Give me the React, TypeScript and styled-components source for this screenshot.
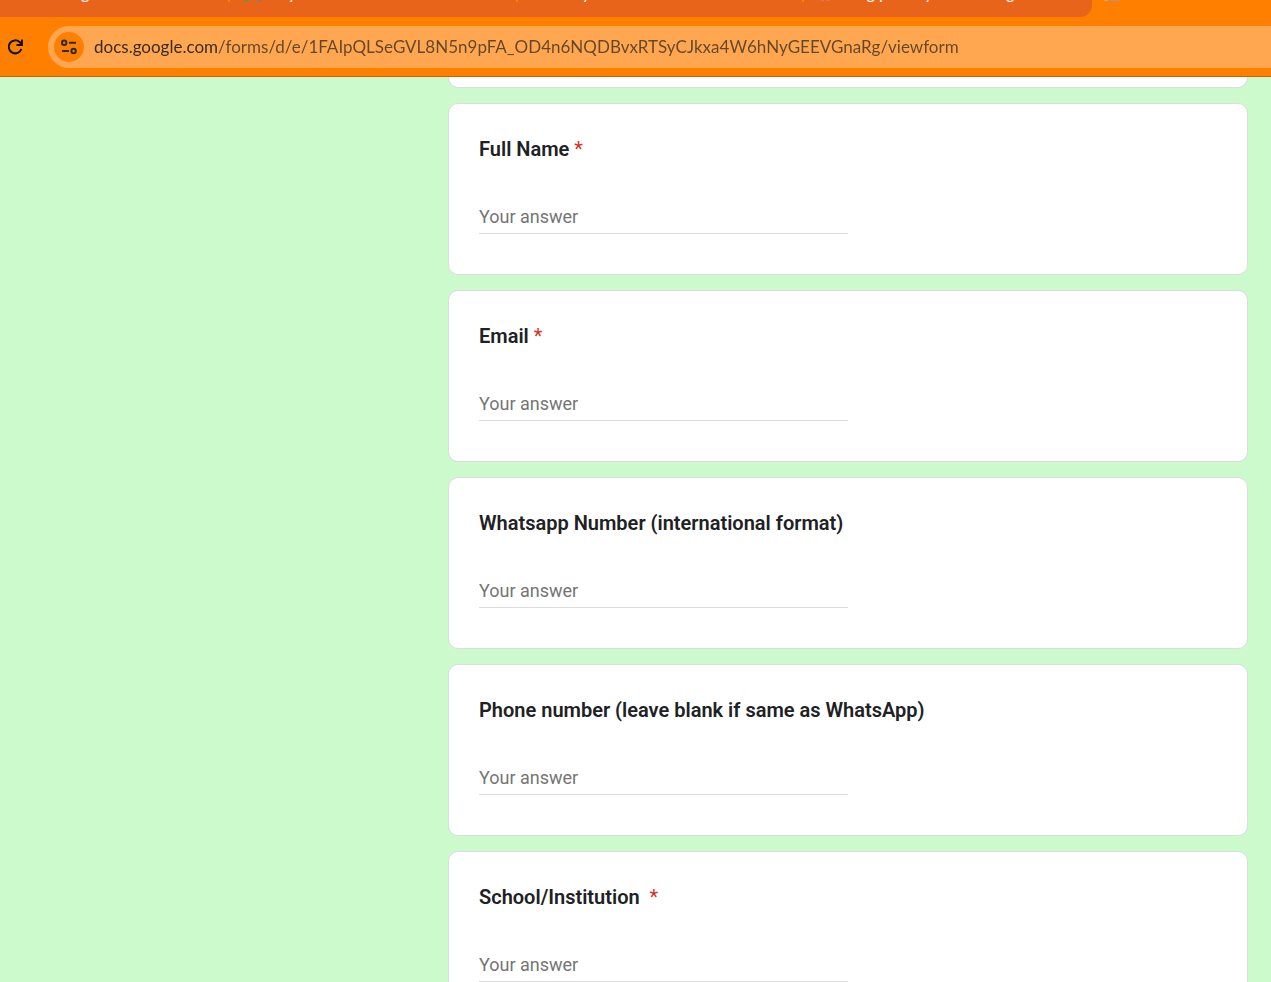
import React, { useId } from "react";
import styled, { createGlobalStyle } from "styled-components";

const GlobalStyle = createGlobalStyle`
  *, *::before, *::after { box-sizing: border-box; }
  body {
    margin: 0;
    font-family: Roboto, "Liberation Sans", sans-serif;
    color: #202124;
    background: #ccfacc;
  }
`;

const Window = styled.div`
  display: flex;
  flex-direction: column;
  height: 100vh;
  overflow: hidden;
`;

const TabStrip = styled.div`
  display: flex;
  flex: none;
  height: 17px;
  overflow: hidden;
  background: #ff8000;
`;

const TabGroup = styled.div`
  display: flex;
  flex: 0 1 1092px;
  height: 17px;
  overflow: hidden;
  background: #e8641b;
  border-bottom-right-radius: 12px;
`;

const Tab = styled.div<{ $basis: number; $inset: number; $divided?: boolean }>`
  display: flex;
  flex: 0 1 ${(p) => p.$basis}px;
  height: 2px;
  gap: 8px;
  padding-left: ${(p) => p.$inset}px;
  overflow: hidden;
  border-right: 2px solid ${(p) => (p.$divided ? "#ff8000" : "transparent")};
`;

const TabTitle = styled.span`
  margin-top: -17px;
  font: 16px/20px Lato, "Noto Sans", sans-serif;
  white-space: pre;
  color: #fff;
`;

const Favicon = styled.svg`
  display: block;
  flex: none;
`;

const NextFavicon = styled(Favicon)`
  margin-left: 12px;
`;

const Toolbar = styled.div`
  display: flex;
  flex: none;
  align-items: center;
  gap: 18px;
  height: 60px;
  background: #ff8000;
  border-bottom: 1px solid #c26608;
`;

const ReloadButton = styled.button`
  display: grid;
  place-items: center;
  width: 30px;
  height: 30px;
  padding: 0;
  border: 0;
  background: none;
`;

const AddressBar = styled.div`
  display: flex;
  flex: 1;
  align-items: center;
  gap: 10px;
  height: 42px;
  padding-left: 6px;
  background: #ffa750;
  border-radius: 21px 0 0 21px;
`;

const SiteButton = styled.button`
  display: grid;
  place-items: center;
  width: 30px;
  height: 30px;
  padding: 0;
  border: 0;
  border-radius: 50%;
  background: #ff8000;
`;

const UrlInput = styled.input`
  flex: 1;
  min-width: 0;
  height: 30px;
  padding: 0;
  border: 0;
  outline: 0;
  font: 17px/30px Lato, "Noto Sans", sans-serif;
  color: transparent;
  caret-color: #2b2b2b;
  background: linear-gradient(to right, #33291f 125px, #644628 125px);
  background-clip: text;
`;

const Page = styled.main`
  flex: 1;
  min-height: 0;
  overflow: hidden;
  padding-right: 23px;
  background: #ccfacc;
`;

const Form = styled.form`
  display: flex;
  flex-direction: column;
  gap: 15px;
  max-width: 800px;
  margin-left: auto;
`;

const Card = styled.div`
  padding: 30px;
  background: #fff;
  border: 1px solid #dadce0;
  border-radius: 10px;
`;

const CardEnd = styled.div`
  height: 11px;
  background: #fff;
  border: 1px solid #dadce0;
  border-top: 0;
  border-radius: 0 0 10px 10px;
`;

const Question = styled.label`
  display: block;
  margin-bottom: 38px;
  font-size: 20px;
  font-weight: 600;
  line-height: 30px;
  white-space: pre-wrap;
`;

const Required = styled.span`
  font-weight: 400;
  color: #d93025;
`;

const Answer = styled.input`
  display: block;
  width: 50%;
  height: 32px;
  margin-bottom: 10px;
  padding: 0 0 3px;
  border: 0;
  border-bottom: 1px solid #dddddd;
  outline: 0;
  font: 18px/28px Roboto, "Liberation Sans", sans-serif;
  color: #202124;
  background: none;

  &::placeholder {
    color: #757575;
    opacity: 1;
  }
`;

type FieldProps = { title: string; required?: boolean };

function Field({ title, required }: FieldProps) {
  const id = useId();
  return (
    <Card>
      <Question htmlFor={id}>
        {title}
        {required && <Required> *</Required>}
      </Question>
      <Answer id={id} type="text" placeholder="Your answer" required={required} />
    </Card>
  );
}

const fields: FieldProps[] = [
  { title: "Full Name", required: true },
  { title: "Email", required: true },
  { title: "Whatsapp Number (international format)" },
  { title: "Phone number (leave blank if same as WhatsApp)" },
  { title: "School/Institution ", required: true },
];

export default function App() {
  return (
    <Window>
      <GlobalStyle />
      <TabStrip>
        <TabGroup>
          <Tab $basis={230} $inset={81} $divided>
            <TabTitle>g</TabTitle>
          </Tab>
          <Tab $basis={288} $inset={14} $divided>
            <Favicon width="20" height="2" viewBox="0 0 20 2" aria-hidden="true">
              <path d="M0 0h6l-2 1H2z" fill="#34a853" />
              <path d="M13 0h5l-2 1h-2z" fill="#4285f4" />
            </Favicon>
            <TabTitle>{"    y"}</TabTitle>
          </Tab>
          <Tab $basis={286} $inset={64} $divided>
            <TabTitle>y</TabTitle>
          </Tab>
          <Tab $basis={288} $inset={16}>
            <Favicon width="14" height="2" viewBox="0 0 14 2" aria-hidden="true">
              <path d="M1 0h3v1H1zM6 0h4v1H6z" fill="#e4705c" />
            </Favicon>
            <TabTitle>{"      g p         y                  g"}</TabTitle>
          </Tab>
        </TabGroup>
        <NextFavicon width="16" height="2" viewBox="0 0 16 2" aria-hidden="true">
          <path d="M0 0h4v1H1z" fill="#d9a07c" />
          <path d="M5 0h11l-2 1H6z" fill="#b98c9c" />
        </NextFavicon>
      </TabStrip>
      <Toolbar>
        <ReloadButton type="button" aria-label="Reload">
          <svg width="18" height="18" viewBox="0 0 18 18" fill="none" stroke="#111" strokeWidth="2">
            <path d="M15.4 11A6.5 6.5 0 1 1 13.6 4L16 6.4" />
            <path d="M16 1.5V7H10.5" />
          </svg>
        </ReloadButton>
        <AddressBar>
          <SiteButton type="button" aria-label="View site information">
            <svg width="18" height="18" viewBox="0 0 18 18" fill="none" stroke="#2b2b2b" strokeWidth="2">
              <circle cx="4.2" cy="4.8" r="2.2" />
              <path d="M9 4.8h7M2 13h7" />
              <circle cx="13.6" cy="13" r="2.2" />
            </svg>
          </SiteButton>
          <UrlInput
            aria-label="Address"
            spellCheck={false}
            defaultValue="docs.google.com/forms/d/e/1FAIpQLSeGVL8N5n9pFA_OD4n6NQDBvxRTSyCJkxa4W6hNyGEEVGnaRg/viewform"
          />
        </AddressBar>
      </Toolbar>
      <Page>
        <Form>
          <CardEnd />
          {fields.map((f) => (
            <Field key={f.title} {...f} />
          ))}
        </Form>
      </Page>
    </Window>
  );
}
